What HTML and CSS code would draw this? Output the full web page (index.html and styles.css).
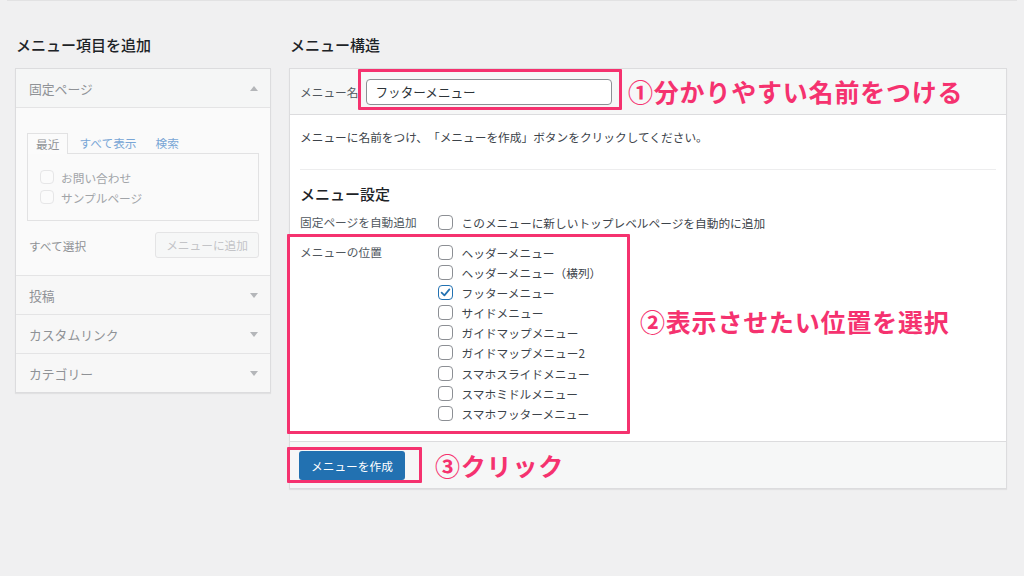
FILE: index.html
```
<!DOCTYPE html>
<html lang="ja">
<head>
<meta charset="utf-8">
<title>メニュー</title>
<link rel="stylesheet" href="styles.css">
</head>
<body>
<div class="topline"></div>
<div class="page">
  <div class="col-left">
    <h2 class="heading">メニュー項目を追加</h2>
    <div class="accordion">
      <div class="acc-head open"><span>固定ページ</span><i class="tri up"></i></div>
      <div class="acc-body">
        <div class="tabs">
          <span class="tab active">最近</span>
          <span class="tab">すべて表示</span>
          <span class="tab">検索</span>
        </div>
        <div class="tab-panel">
          <div class="item"><span class="cb-faded"></span>お問い合わせ</div>
          <div class="item"><span class="cb-faded"></span>サンプルページ</div>
        </div>
        <div class="acc-actions">
          <span class="select-all">すべて選択</span>
          <span class="btn-disabled">メニューに追加</span>
        </div>
      </div>
      <div class="acc-head closed"><span>投稿</span><i class="tri down"></i></div>
      <div class="acc-head closed"><span>カスタムリンク</span><i class="tri down"></i></div>
      <div class="acc-head closed"><span>カテゴリー</span><i class="tri down"></i></div>
    </div>
  </div>

  <div class="col-right">
    <h2 class="heading">メニュー構造</h2>
    <div class="panel">
      <div class="panel-head">
        <span class="name-label">メニュー名</span>
        <div class="name-input">フッターメニュー</div>
      </div>
      <div class="panel-body">
        <p class="desc">メニューに名前をつけ、「メニューを作成」ボタンをクリックしてください。</p>
        <div class="divider"></div>
        <h3 class="sub-heading">メニュー設定</h3>
        <div class="setting-row first">
          <div class="setting-label">固定ページを自動追加</div>
          <div class="setting-opts">
            <div class="opt"><span class="cb"></span>このメニューに新しいトップレベルページを自動的に追加</div>
          </div>
        </div>
        <div class="setting-row locations">
          <div class="setting-label">メニューの位置</div>
          <div class="setting-opts">
            <div class="opt"><span class="cb"></span>ヘッダーメニュー</div>
            <div class="opt"><span class="cb"></span>ヘッダーメニュー（横列）</div>
            <div class="opt"><span class="cb checked"><svg viewBox="0 0 15 15" width="15" height="15"><path d="M3.6 7.6 L6.4 10.4 L11.4 4.4" fill="none" stroke="#2271b1" stroke-width="1.7" stroke-linecap="round" stroke-linejoin="round"/></svg></span>フッターメニュー</div>
            <div class="opt"><span class="cb"></span>サイドメニュー</div>
            <div class="opt"><span class="cb"></span>ガイドマップメニュー</div>
            <div class="opt"><span class="cb"></span>ガイドマップメニュー2</div>
            <div class="opt"><span class="cb"></span>スマホスライドメニュー</div>
            <div class="opt"><span class="cb"></span>スマホミドルメニュー</div>
            <div class="opt"><span class="cb"></span>スマホフッターメニュー</div>
          </div>
        </div>
      </div>
      <div class="panel-foot">
        <span class="btn-primary">メニューを作成</span>
      </div>

      <div class="mark mark-1"></div>
      <div class="mark mark-2"></div>
      <div class="mark mark-3"></div>
      <div class="note note-1">①分かりやすい名前をつける</div>
      <div class="note note-2">②表示させたい位置を選択</div>
      <div class="note note-3">③クリック</div>
    </div>
  </div>
</div>
</body>
</html>
```
FILE: styles.css
```
* { box-sizing: border-box; }
html, body { margin: 0; padding: 0; }
body {
  background: #f0f0f1;
  font-family: "Noto Sans CJK JP", "Noto Sans", sans-serif;
  color: #3c434a;
  width: 1024px;
  height: 576px;
  overflow: hidden;
  text-spacing-trim: space-all;
}
.topline { height: 1px; margin: 0 7px; background: #e2e2e3; }
.page { display: flex; padding: 34px 0 0 15px; }
.heading {
  margin: 0 0 13px 1px;
  font-size: 15px;
  line-height: 20px;
  font-weight: 500;
  color: #1d2327;
}
.col-left { width: 256px; }
.col-right { width: 718px; margin-left: 18px; }
.col-right .heading { margin-left: 1px; }

/* left accordion */
.accordion {
  border: 1px solid #dcdcde;
  background: #fafafa;
  box-shadow: 0 1px 1px rgba(0,0,0,0.06);
}
.acc-head {
  display: flex;
  align-items: center;
  justify-content: space-between;
  height: 39px;
  padding: 0 12px 0 13px;
  font-size: 12.8px;
  color: #8f9296;
  background: #f7f7f7;
}
.acc-head.open { height: 39px; border-bottom: 1px solid #e4e4e5; background: #f5f6f6; }
.acc-head.closed { border-top: 1px solid #e4e4e5; }
.tri { width: 0; height: 0; border-left: 4px solid transparent; border-right: 4px solid transparent; }
.tri.up { border-bottom: 5px solid #b4b6b9; }
.tri.down { border-top: 5px solid #b4b6b9; }
.acc-body { padding: 24px 11px 17px 11px; background: #fafafa; }
.tabs { display: flex; height: 21px; font-size: 11.7px; }
.tab { padding: 0 7px; margin-left: 3px; line-height: 20px; color: #79a6d6; border: 1px solid transparent; border-bottom: none; }
.tab.active { margin-left: 0; padding: 0 8px; color: #8f9296; background: #fbfbfb; border-color: #e2e2e3; position: relative; top: 1px; height: 21px; }
.tab-panel {
  height: 68px;
  border: 1px solid #e2e2e3;
  padding: 13px 12px 0;
  background: #fafafa;
}
.item { display: flex; align-items: center; height: 20px; font-size: 11.7px; color: #a1a4a8; }
.cb-faded { width: 14px; height: 14px; border: 1px solid #e6e6e7; border-radius: 4px; background: #fbfbfb; margin-right: 7px; }
.acc-actions { display: flex; justify-content: space-between; align-items: center; margin-top: 11px; height: 26px; }
.select-all { font-size: 11.7px; color: #8f9296; padding-left: 2px; }
.btn-disabled {
  height: 26px; line-height: 24px; padding: 0 10px;
  border: 1px solid #e4e4e5; border-radius: 3px; background: #f6f7f7;
  font-size: 11.7px; color: #c3c4c7;
}

/* right panel */
.panel {
  position: relative;
  border: 1px solid #dcdcde;
  background: #fff;
  box-shadow: 0 1px 1px rgba(0,0,0,0.06);
}
.panel-head {
  display: flex; align-items: center;
  height: 46px;
  padding: 0 10px;
  background: #f6f7f7;
  border-bottom: 1px solid #dcdcde;
}
.name-label { font-size: 11.7px; color: #50575e; margin-right: 8px; }
.name-input {
  width: 246px; height: 26px; line-height: 24px;
  padding: 0 8px;
  border: 1px solid #8c8f94; border-radius: 4px; background: #fff;
  font-size: 12.6px; color: #2c3338;
}
.panel-body { padding: 14px 10px 18px; }
.desc { margin: 0; font-size: 11.7px; line-height: 16px; color: #3c434a; }
.divider { margin-top: 24px; height: 1px; background: #ededee; }
.sub-heading { margin: 14px 0 0; font-size: 15px; line-height: 20px; font-weight: 500; color: #1d2327; }
.setting-row { display: grid; grid-template-columns: 138px 1fr; font-size: 11.7px; }
.setting-row.first { margin-top: 8px; }
.setting-row.locations { margin-top: 10px; }
.setting-label { line-height: 20px; color: #50575e; }
.opt { display: flex; align-items: center; height: 20.15px; color: #3c434a; }
.cb {
  width: 15px; height: 15px; margin-right: 8.5px;
  border: 1px solid #8c8f94; border-radius: 4px; background: #fff;
  display: flex; align-items: center; justify-content: center;
}
.cb.checked { border-color: #2271b1; }
.cb svg { display: block; margin: -1px; }
.panel-foot {
  height: 47px;
  padding: 9px 9px 0;
  background: #f6f7f7;
  border-top: 1px solid #dcdcde;
}
.btn-primary {
  display: inline-block;
  height: 29px; line-height: 29px;
  padding: 0 12px;
  background: #2271b1; color: #fff;
  border-radius: 3px;
  font-size: 11.7px;
}

/* annotations */
.mark { position: absolute; border: 3px solid #f5326f; border-radius: 1px; }
.mark-1 { left: 68px; top: 0; width: 264px; height: 41px; }
.mark-2 { left: -3px; top: 165px; width: 343px; height: 200px; }
.mark-3 { left: -3px; top: 378px; width: 135px; height: 36px; }
.note {
  position: absolute;
  font-size: 25px; line-height: 30px; font-weight: 700;
  letter-spacing: 0.8px;
  color: #f5326f; white-space: nowrap;
}
.note-1 { left: 338px; top: 7px; }
.note-2 { left: 350px; top: 237px; }
.note-3 { left: 145px; top: 381px; }
```
